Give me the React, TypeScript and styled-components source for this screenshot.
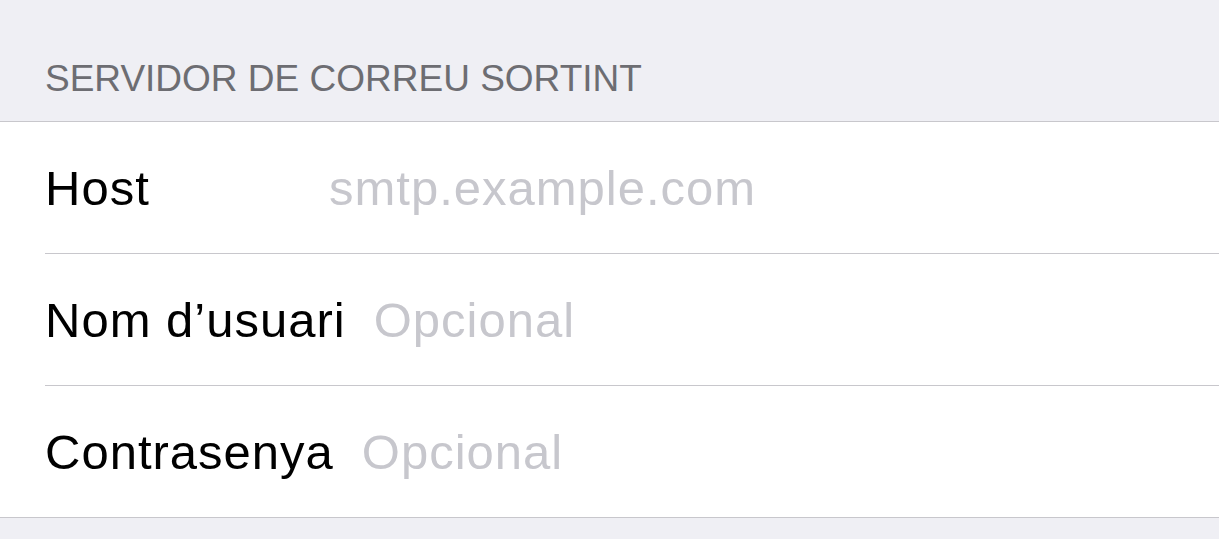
import styled, { createGlobalStyle } from "styled-components";

const GlobalStyle = createGlobalStyle`
  html, body {
    margin: 0;
    padding: 0;
    background: #efeff4;
    font-family: "Liberation Sans", Arial, sans-serif;
  }
`;

interface Field {
  label: string;
  placeholder: string;
}

const fields: Field[] = [
  { label: "Host", placeholder: "smtp.example.com" },
  { label: "Nom d\u2019usuari", placeholder: "Opcional" },
  { label: "Contrasenya", placeholder: "Opcional" },
];

const App = () => {
  return (
    <Page>
      <GlobalStyle />
      <SectionHeader>SERVIDOR DE CORREU SORTINT</SectionHeader>
      <Group>
        {fields.map((field, i) => (
          <Row key={field.label} last={i === fields.length - 1}>
            <Label>{field.label}</Label>
            <Input placeholder={field.placeholder} />
          </Row>
        ))}
      </Group>
    </Page>
  );
};

export default App;

const Page = styled.div`
  width: 1219px;
  height: 539px;
  background: #efeff4;
  overflow: hidden;
`;

const SectionHeader = styled.div`
  height: 121px;
  box-sizing: border-box;
  display: flex;
  align-items: flex-end;
  padding: 0 0 24px 45px;
  font-size: 37px;
  line-height: 1;
  color: #6d6d72;
`;

const Group = styled.div`
  background: #ffffff;
  border-top: 1px solid #c8c7cc;
  border-bottom: 1px solid #c8c7cc;
  padding-left: 45px;
`;

const Row = styled.div<{ last?: boolean }>`
  height: ${(p) => (p.last ? "131px" : "132px")};
  box-sizing: border-box;
  display: flex;
  align-items: center;
  border-bottom: ${(p) => (p.last ? "none" : "1px solid #c8c7cc")};
`;

const Label = styled.span`
  min-width: 256px;
  margin-right: 28px;
  font-size: 49px;
  letter-spacing: 1px;
  color: #000000;
  white-space: nowrap;
`;

const Input = styled.input`
  flex: 1;
  border: none;
  outline: none;
  padding: 0;
  background: transparent;
  font-family: "Liberation Sans", Arial, sans-serif;
  font-size: 49px;
  letter-spacing: 1px;
  color: #000000;

  &::placeholder {
    color: #c7c7cd;
  }
`;
